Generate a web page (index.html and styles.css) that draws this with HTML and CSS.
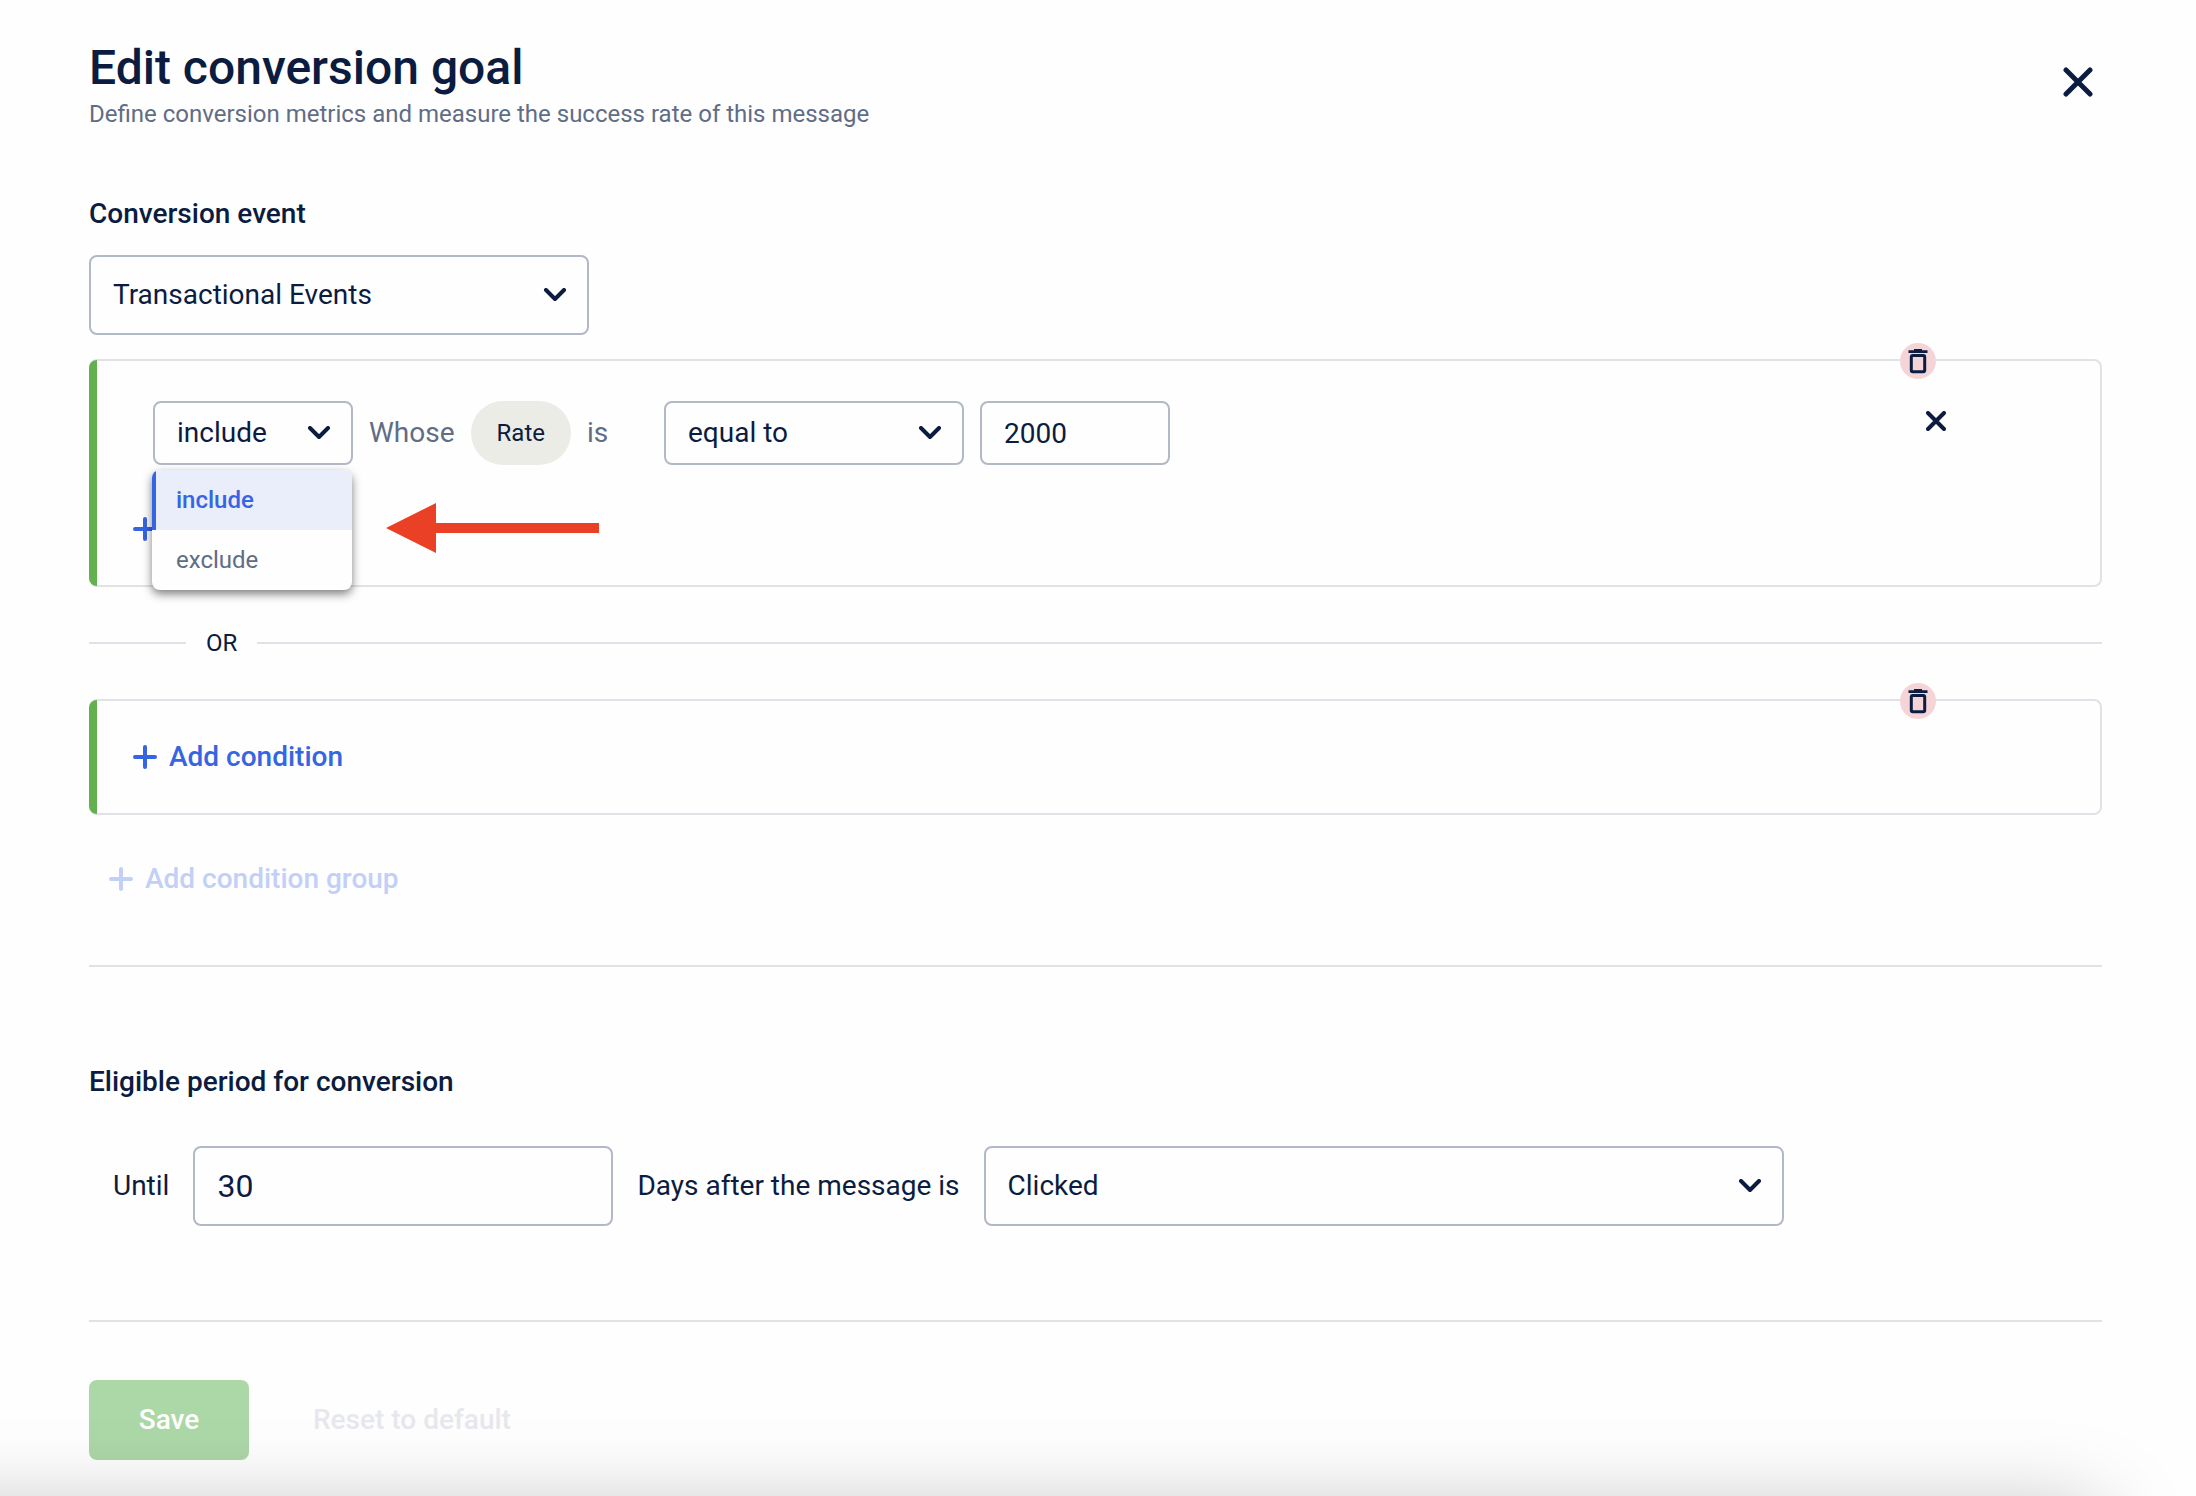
FILE: index.html
```html
<!DOCTYPE html>
<html lang="en">
<head>
    <meta charset="utf-8">
    <title>Edit conversion goal</title>
    <link rel="stylesheet" href="styles.css">
</head>
<body>
    <form class="container">
        <header class="header">
            <div>
                <h1>Edit conversion goal</h1>
                <p class="subtitle">Define conversion metrics and measure the success rate of this message</p>
            </div>
            <button type="button" class="icon-btn close-btn" aria-label="Close">
                <svg width="30" height="30" viewBox="0 0 30 30"><path d="M3 3L27 27M27 3L3 27"/></svg>
            </button>
        </header>

        <label class="heading" for="event">Conversion event</label>
        <div class="select event-select">
            <select id="event" class="form-control">
                <option>Transactional Events</option>
            </select>
            <svg class="chevron" width="24" height="14" viewBox="0 0 24 14"><path d="M3 2L12 11L21 2"/></svg>
        </div>

        <section class="group">
            <button type="button" class="trash-btn" aria-label="Delete group">
                <svg width="36" height="36" viewBox="0 0 36 36"><path d="M8.5 7.3H14V6H22V7.3H27.5V10H8.5Z"/><rect x="11.3" y="12.6" width="13.4" height="16.2" rx="1.5"/></svg>
            </button>
            <div class="condition">
                <div class="select include-select">
                    <select class="form-control small" aria-label="Include or exclude">
                        <option>include</option>
                        <option>exclude</option>
                    </select>
                    <svg class="chevron" width="24" height="14" viewBox="0 0 24 14"><path d="M3 2L12 11L21 2"/></svg>
                    <!-- opened menu -->
                    <ul class="menu">
                        <li class="selected">include</li>
                        <li>exclude</li>
                    </ul>
                    <svg class="arrow" width="213" height="50" viewBox="0 0 213 50"><path d="M0 25L50 0V20H213V30H50V50Z"/></svg>
                </div>
                <span class="word">Whose</span>
                <span class="pill">Rate</span>
                <span class="word is">is</span>
                <div class="select operator-select">
                    <select class="form-control small" aria-label="Operator">
                        <option>equal to</option>
                    </select>
                    <svg class="chevron" width="24" height="14" viewBox="0 0 24 14"><path d="M3 2L12 11L21 2"/></svg>
                </div>
                <input type="text" class="form-control small value-input" value="2000" aria-label="Value">
                <button type="button" class="icon-btn remove-btn" aria-label="Remove condition">
                    <svg width="20" height="20" viewBox="0 0 20 20"><path d="M2 2L18 18M18 2L2 18"/></svg>
                </button>
            </div>
            <button type="button" class="add-btn">
                <svg width="24" height="24" viewBox="0 0 24 24"><path d="M12 2V22M2 12H22"/></svg>
                Add condition
            </button>
        </section>

        <div class="or">OR</div>

        <section class="group">
            <button type="button" class="trash-btn" aria-label="Delete group">
                <svg width="36" height="36" viewBox="0 0 36 36"><path d="M8.5 7.3H14V6H22V7.3H27.5V10H8.5Z"/><rect x="11.3" y="12.6" width="13.4" height="16.2" rx="1.5"/></svg>
            </button>
            <button type="button" class="add-btn">
                <svg width="24" height="24" viewBox="0 0 24 24"><path d="M12 2V22M2 12H22"/></svg>
                Add condition
            </button>
        </section>

        <button type="button" class="add-btn add-group" disabled>
            <svg width="24" height="24" viewBox="0 0 24 24"><path d="M12 2V22M2 12H22"/></svg>
            Add condition group
        </button>

        <hr>

        <h2 class="heading period-heading">Eligible period for conversion</h2>
        <div class="period">
            <label for="days">Until</label>
            <input type="text" id="days" class="form-control days-input" value="30">
            <label for="action">Days after the message is</label>
            <div class="select action-select">
                <select id="action" class="form-control">
                    <option>Clicked</option>
                </select>
                <svg class="chevron" width="24" height="14" viewBox="0 0 24 14"><path d="M3 2L12 11L21 2"/></svg>
            </div>
        </div>

        <hr>

        <div class="actions">
            <button type="submit" class="btn save-btn" disabled>Save</button>
            <button type="reset" class="btn reset-btn" disabled>Reset to default</button>
        </div>
    </form>
    <div class="bottom-shadow"></div>
</body>
</html>
```

FILE: styles.css
```css
* {
    box-sizing: border-box;
}
body {
    margin: 0;
    background-color: #fefefe;
    color: #0b1c40;
    font-family: Roboto, sans-serif;
    font-size: 28px;
    line-height: 32px;
}
button, input, select {
    font: inherit;
    color: inherit;
}
button {
    background: none;
    border: none;
    padding: 0;
    cursor: pointer;
}
svg {
    display: block;
    fill: none;
    stroke: currentColor;
    stroke-linecap: round;
    stroke-linejoin: round;
    stroke-width: 4px;
}
.container {
    padding: 40px 94px 36px 89px;
}
.header {
    display: flex;
    justify-content: space-between;
    margin-bottom: 66px;
}
h1 {
    margin: 0;
    font-size: 48px;
    line-height: 56px;
    font-weight: 500;
}
.subtitle {
    margin: 0;
    color: #616c85;
    font-size: 24px;
    line-height: 36px;
}
.icon-btn {
    display: flex;
    align-items: center;
    justify-content: center;
}
.close-btn {
    width: 48px;
    height: 48px;
    margin-top: 18px;
}
.close-btn svg {
    stroke-width: 5px;
}
.heading {
    display: block;
    margin: 0 0 25px;
    font-size: 28px;
    font-weight: 500;
}

/* form controls */
.form-control {
    display: block;
    width: 100%;
    height: 80px;
    padding: 0 22px;
    border: 2px solid #b3b8c6;
    border-radius: 8px;
    background-color: #fefefe;
    appearance: none;
    outline: none;
}
.form-control.small {
    height: 64px;
}
.select {
    position: relative;
}
.chevron {
    position: absolute;
    right: 22px;
    top: 50%;
    margin-top: -7px;
    pointer-events: none;
}
.event-select {
    max-width: 500px;
    margin-bottom: 24px;
}

/* condition groups */
.group {
    position: relative;
    padding: 24px 144px 24px 42px;
    border: 2px solid #e1e2e8;
    border-radius: 8px;
}
.group::before {
    content: "";
    position: absolute;
    left: -2px;
    top: -1px;
    bottom: -1px;
    width: 8px;
    border-radius: 8px 0 0 8px;
    background-color: #62b04e;
}
.trash-btn {
    position: absolute;
    top: -18px;
    right: 164px;
    border-radius: 50%;
    background-color: #f5d4d8;
}
.trash-btn path {
    fill: currentColor;
    stroke: none;
}
.trash-btn rect {
    stroke-width: 3px;
}
.condition {
    display: flex;
    align-items: center;
    gap: 16px;
    margin: 16px 0 32px 20px;
}
.include-select {
    width: 200px;
}
.operator-select {
    width: 300px;
}
.value-input {
    width: 190px;
}
.word {
    color: #616c85;
}
.is {
    width: 61px;
}
.pill {
    padding: 16px 26px;
    border-radius: 32px;
    background-color: #ebece6;
    font-size: 24px;
}
.remove-btn {
    width: 40px;
    height: 40px;
    margin-left: auto;
    align-self: flex-start;
}
.add-btn {
    display: flex;
    align-items: center;
    gap: 12px;
    height: 64px;
    color: #3665e3;
    font-weight: 500;
}
.add-btn:disabled {
    color: #c2d0f7;
}
.add-group {
    margin: 32px 0 54px 20px;
}

/* dropdown menu */
.menu {
    position: absolute;
    z-index: 1;
    top: 69px;
    left: -1px;
    width: 200px;
    margin: 0;
    padding: 0;
    list-style: none;
    overflow: hidden;
    border-radius: 8px;
    background-color: #fefefe;
    box-shadow: 0 4px 10px rgba(0, 0, 0, 0.5);
    color: #616c85;
    font-size: 24px;
    line-height: 60px;
}
.menu li {
    padding-left: 20px;
    border-left: 4px solid transparent;
}
.menu .selected {
    border-color: #3665e3;
    background-color: #eaeefb;
    color: #3665e3;
    font-weight: 500;
}
.arrow {
    position: absolute;
    top: 102px;
    left: 233px;
    fill: #ea4025;
    stroke: none;
}

.or {
    display: flex;
    align-items: center;
    gap: 20px;
    height: 112px;
    font-size: 24px;
}
.or::before, .or::after {
    content: "";
    width: 97px;
    height: 2px;
    background-color: #e1e2e8;
}
.or::after {
    flex: 1;
}
hr {
    height: 2px;
    margin: 0;
    border: none;
    background-color: #e1e2e8;
}

/* eligible period */
.period-heading {
    margin: 99px 0 48px;
}
.period {
    display: flex;
    align-items: center;
    gap: 24px;
    margin: 0 0 94px 24px;
}
.days-input {
    width: 420px;
    font-size: 32px;
}
.action-select {
    width: 800px;
}

.actions {
    display: flex;
    gap: 24px;
    margin-top: 58px;
}
.btn {
    height: 80px;
    border-radius: 8px;
    font-weight: 500;
}
.save-btn {
    width: 160px;
    background-color: #acd7a7;
    color: #fff;
}
.reset-btn {
    padding: 0 40px;
    color: #e7e8ed;
}
.bottom-shadow {
    position: fixed;
    top: 100%;
    left: -200px;
    right: 96px;
    height: 400px;
    box-shadow: 0 15px 80px rgba(0, 0, 0, 0.26);
    pointer-events: none;
}
```
